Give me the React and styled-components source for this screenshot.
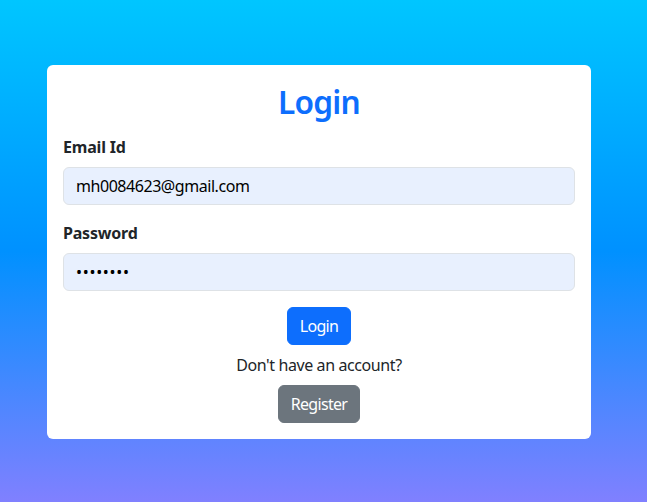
import React from "react";
import styled, { createGlobalStyle } from "styled-components";

const Global = createGlobalStyle`
  html, body { margin: 0; padding: 0; }
  body {
    font-family: "Noto Sans", "Open Sans", sans-serif;
    font-size: 16px;
    line-height: 1.5;
    letter-spacing: -0.4px;
    color: #212529;
  }
  * { box-sizing: border-box; }
`;

const Page = styled.div`
  min-height: 502px;
  background: linear-gradient(180deg, #00c6ff 0%, #0091ff 50%, #8080ff 100%);
  padding: 65px 56px 0 47px;
`;

const Card = styled.div`
  width: 544px;
  background: #fff;
  border-radius: 6px;
  padding: 16px;
  display: flex;
  flex-direction: column;
`;

const Title = styled.h1`
  margin: 0 0 16px;
  padding-top: 2px;
  height: 38px;
  font-size: 31.7px;
  line-height: 1.2;
  font-weight: 600;
  letter-spacing: -0.8px;
  color: #0d6efd;
  text-align: center;
`;

const Group = styled.div`
  margin-bottom: 16px;
  display: flex;
  flex-direction: column;
`;

const Label = styled.label`
  font-weight: 700;
  letter-spacing: -0.2px;
  margin-bottom: 8px;
`;

const Input = styled.input`
  height: 38px;
  padding: 6px 12px;
  font: inherit;
  font-size: 16px;
  letter-spacing: ${(p) => (p.type === "password" ? "0.7px" : "-0.45px")};
  color: #000;
  background: #e8f0fe;
  border: 1px solid #dee2e6;
  border-radius: 6px;
  outline: none;
`;

const Actions = styled.div`
  display: flex;
  flex-direction: column;
  align-items: center;
`;

const Button = styled.button`
  font: inherit;
  font-size: 16px;
  line-height: 24px;
  letter-spacing: -0.7px;
  padding: 6px 12px;
  border: 1px solid ${(p) => p.$bg};
  border-radius: 6px;
  background: ${(p) => p.$bg};
  color: #fff;
`;

const Note = styled.p`
  margin: 8px 0;
`;

export default function App() {
  return (
    <>
      <Global />
      <Page>
        <Card>
          <Title>Login</Title>
          <Group>
            <Label>Email Id</Label>
            <Input type="email" defaultValue="mh0084623@gmail.com" />
          </Group>
          <Group>
            <Label>Password</Label>
            <Input type="password" defaultValue="12345678" />
          </Group>
          <Actions>
            <Button $bg="#0d6efd">Login</Button>
            <Note>Don't have an account?</Note>
            <Button $bg="#6c757d">Register</Button>
          </Actions>
        </Card>
      </Page>
    </>
  );
}
